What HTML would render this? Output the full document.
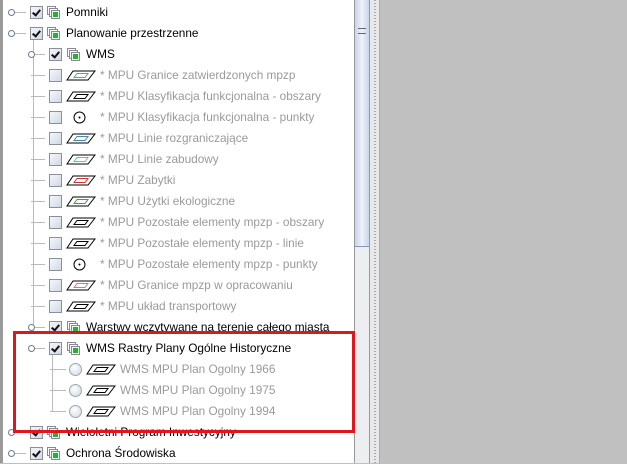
<!DOCTYPE html><html><head><meta charset="utf-8"><style>
body{margin:0;width:627px;height:463px;overflow:hidden;background:#c0c0c0;font-family:"Liberation Sans",Arial,sans-serif;font-size:12px;position:relative}
#tree{position:absolute;left:0;top:0;width:354px;height:463px;background:#fff;border-left:3px solid #9a9a9a;box-sizing:border-box}
.r{position:absolute;height:21px;line-height:21px;white-space:nowrap}
.cb{position:absolute;width:11px;height:11px;border:1px solid #8a8f99;background:linear-gradient(135deg,#f4f6fa,#d2d9e6);top:4px}
.cb.c::after{content:"";position:absolute;left:3px;top:1px;width:3px;height:6px;border:solid #111;border-width:0 2px 2px 0;transform:rotate(40deg)}
.lay{position:absolute;top:4px;width:13px;height:13px}
.t{position:absolute;top:0;color:#000;font-size:11.8px}
.g{color:#9a9a9a}
.exp{position:absolute;width:5px;height:5px;border:1px solid #6a7a99;border-radius:50%;top:7px;background:#fff}
.hl{position:absolute;height:1px;background:#bbb}
.vl{position:absolute;width:1px;background:#bbb}
.rad{position:absolute;top:4px;width:11px;height:11px;border:1px solid #9aa;border-radius:50%;background:radial-gradient(circle at 40% 35%,#fff,#cfd6e2)}
</style></head><body>
<div id="tree">
<div class="vl" style="left:30px;top:33px;height:300px"></div>
<div class="vl" style="left:49px;top:348px;height:63px"></div>
</div>
<div style="position:absolute;left:354px;top:0;width:15px;height:463px;background:#eceef2;border-left:1px solid #999;box-sizing:border-box"></div>
<div style="position:absolute;left:355px;top:0;width:14px;height:247px;background:linear-gradient(90deg,#c8d4ea,#eef2fa 50%,#c8d4ea);border-bottom:1px solid #8899bb;box-sizing:border-box"></div>
<div style="position:absolute;left:358px;top:28px;width:8px;height:4px;border-top:1px solid #667;border-bottom:1px solid #667"></div>
<div style="position:absolute;left:369px;top:0;width:11px;height:463px;background:#e8e8e8;border-left:1px solid #999;border-right:1px solid #aaa;box-sizing:border-box"></div>
<div style="position:absolute;left:374px;top:0;width:2px;height:463px;background:repeating-linear-gradient(#aaa 0 1px,transparent 1px 3px)"></div>
<div id="rows"></div>
<div style="position:absolute;left:13px;top:331px;width:342px;height:102px;border:3px solid #e0161c;box-sizing:border-box"></div>
<script>
const rows=[
[0,'Pomniki',1,'e'],[0,'Planowanie przestrzenne',1,'o'],[1,'WMS',1,'e'],
[2,'* MPU Granice zatwierdzonych mpzp','#4aa'],[2,'* MPU Klasyfikacja funkcjonalna - obszary','#000'],[2,'* MPU Klasyfikacja funkcjonalna - punkty','p'],
[2,'* MPU Linie rozgraniczające','#48a'],[2,'* MPU Linie zabudowy','#4cc'],[2,'* MPU Zabytki','#c33'],[2,'* MPU Użytki ekologiczne','#3a3'],
[2,'* MPU Pozostałe elementy mpzp - obszary','#000'],[2,'* MPU Pozostałe elementy mpzp - linie','#000'],[2,'* MPU Pozostałe elementy mpzp - punkty','p'],
[2,'* MPU Granice mpzp w opracowaniu','#d77'],[2,'* MPU układ transportowy','#000'],
[1,'Warstwy wczytywane na terenie całego miasta',1,'e'],[1,'WMS Rastry Plany Ogólne Historyczne',1,'o'],
[3,'WMS MPU Plan Ogolny 1966'],[3,'WMS MPU Plan Ogolny 1975'],[3,'WMS MPU Plan Ogolny 1994'],
[0,'Wieloletni Program Inwestycyjny',1,'e'],[0,'Ochrona Środowiska',1,'e']];
const lay='<svg class="lay" viewBox="0 0 13 13"><rect x="0.5" y="0.5" width="8" height="8" fill="#fff" stroke="#889"/><rect x="2.5" y="2.5" width="8" height="8" fill="#fff" stroke="#889"/><rect x="4.5" y="4.5" width="8" height="8" fill="#dfe" stroke="#889"/><rect x="6" y="6" width="5" height="5" fill="#3a3"/></svg>';
function para(c,w){return `<svg style="position:absolute;top:5px" width="${w}" height="11" viewBox="0 0 30 11"><path d="M7 1H29L22 10H1Z" fill="#fff" stroke="#000"/><path d="M11 3.5H22L19 7.5H8Z" fill="none" stroke="${c}"/></svg>`}
let h='';
rows.forEach((r,i)=>{const y=2+21*i;const [lv,txt,ck,ex]=r;let s='';
if(lv===0){s+=`<div class="hl" style="left:12px;top:10px;width:14px"></div>`;s+=`<div class="exp" style="left:8px"></div>`;s+=`<div class="cb c" style="left:30px"></div><div style="position:absolute;left:47px">${lay}</div><div class="t" style="left:66px">${txt}</div>`}
else if(lv===1){s+=`<div class="hl" style="left:31px;top:10px;width:14px"></div><div class="exp" style="left:28px"></div><div class="cb c" style="left:49px"></div><div style="position:absolute;left:67px">${lay}</div><div class="t" style="left:86px">${txt}</div>`}
else if(lv===2){s+=`<div class="hl" style="left:31px;top:10px;width:14px"></div><div class="cb" style="left:49px"></div>`;
 if(ck==='p')s+=`<svg style="position:absolute;left:73px;top:4px" width="13" height="13"><circle cx="6.5" cy="6.5" r="5.5" fill="#fff" stroke="#000"/><circle cx="6.5" cy="6.5" r="1" fill="#000"/></svg>`;else s+=`<div style="position:absolute;left:66px">${para(ck,30)}</div>`;
 s+=`<div class="t g" style="left:100px">${txt}</div>`}
else{s+=`<div class="hl" style="left:50px;top:10px;width:16px"></div><div class="rad" style="left:69px"></div><div style="position:absolute;left:86px">${para('#000',30)}</div><div class="t g" style="left:120px">${txt}</div>`}
h+=`<div class="r" style="left:0;top:${y}px;width:353px">${s}</div>`});
document.getElementById('rows').innerHTML=h;
</script>
</body></html>
